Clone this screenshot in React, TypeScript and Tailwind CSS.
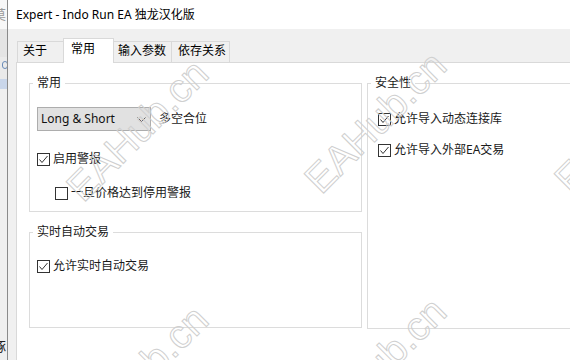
import React from "react";

const ui = "font-['Noto_Sans','Noto_Sans_CJK_SC',sans-serif]";

function Box({ on }: { on: boolean }) {
  return (
    <span className="flex h-[13px] w-[13px] shrink-0 items-center justify-center border border-[#333] bg-white">
      {on && (
        <svg width="11" height="11" viewBox="0 0 11 11">
          <path d="M1.5 5.5 L4 8.5 L9.5 2" fill="none" stroke="#333" strokeWidth="1" />
        </svg>
      )}
    </span>
  );
}

function CheckRow({ on, label, className = "" }: { on: boolean; label: string; className?: string }) {
  return (
    <div className={`flex h-4 items-center ${className}`}>
      <Box on={on} />
      <span className="ml-[3px] leading-4 text-[#1a1a1a]">{label}</span>
    </div>
  );
}

function Group({ title, className = "", children }: { title: string; className?: string; children: React.ReactNode }) {
  return (
    <fieldset className={`shrink-0 border border-[#dcdcdc] px-[3px] ${className}`}>
      <legend className="px-1 leading-4 text-[#1a1a1a]">{title}</legend>
      {children}
    </fieldset>
  );
}

const tabs = [
  { name: "关于", cls: "w-[46px] border-l pl-[5px]" },
  { name: "常用", cls: "" },
  { name: "输入参数", cls: "w-[58px] border-r pl-[4px]" },
  { name: "依存关系", cls: "w-[58px] border-r pl-[6px]" },
];

const marks = [
  "left-[47px] top-[110px]",
  "left-[285px] top-[102px]",
  "left-[535px] top-[102px]",
  "left-[47px] top-[356px]",
  "left-[285px] top-[348px]",
];

export default function App() {
  return (
    <div className={`relative flex h-[360px] w-[570px] overflow-hidden bg-[#f0f0f0] text-[12px] ${ui}`}>
      {/* window behind the dialog */}
      <div className="flex w-[7px] shrink-0 flex-col overflow-hidden">
        <div className="h-[29px] bg-[#f7f7f7] pt-[6px] text-[13px] leading-4 text-[#9a9a9a]">
          <span className="-ml-[7px]">莫</span>
        </div>
        <div className="h-[28px] bg-[#e4e4e4]" />
        <div className="h-[22px] bg-[#eaeaea]">
          <div className="ml-[2px] mt-[4px] h-[8px] w-[6px] rounded-full border border-[#6a8cb8]" />
        </div>
        <div className="h-[10px] bg-[#c9d6ea]" />
        <div className="flex-1 bg-[#efefef]" />
        <div className="h-[22px] bg-[#efefef] text-[13px] leading-4 text-[#222]">
          <span className="-ml-[7px]">琢</span>
        </div>
      </div>
      <div className="w-px shrink-0 bg-[#8a8a8a]" />

      {/* dialog */}
      <div className="flex min-w-0 flex-1 flex-col">
        <div className="flex h-[29px] shrink-0 items-center bg-white pl-[8px] text-[12px] text-black">
          Expert - Indo Run EA 独龙汉化版
        </div>
        <div className="flex flex-1 flex-col pl-[8px] pt-[9px]">
          <div className="flex h-[24px] items-end pl-px">
            {tabs.map((t) =>
              t.name === "常用" ? (
                <div
                  key={t.name}
                  className="relative z-10 -mb-px h-[25px] w-[51px] shrink-0 border border-b-0 border-[#d9d9d9] bg-white pl-[7px] pt-[2px] leading-4 text-black"
                >
                  {t.name}
                </div>
              ) : (
                <div
                  key={t.name}
                  className={`h-[21px] shrink-0 border-t border-[#d9d9d9] bg-[#f0f0f0] pt-px leading-4 text-black ${t.cls}`}
                >
                  {t.name}
                </div>
              )
            )}
          </div>
          <div className="flex-1 border border-r-0 border-b-0 border-[#d9d9d9] bg-white pl-[12px] pt-[12px]">
            <div className="flex gap-[5px]">
              <div className="flex w-[333px] shrink-0 flex-col gap-3">
                <Group title="常用" className="h-[137px]">
                  <div className="px-1">
                    <div className="mt-4 flex items-center">
                      <div className="flex h-[24px] w-[114px] items-center justify-between border border-[#adadad] bg-[#e1e1e1] pl-[3px] pr-[4px]">
                        <span className="leading-4 text-[#111]">Long &amp; Short</span>
                        <svg width="9" height="5" viewBox="0 0 9 5">
                          <path d="M0.5 0.5 L4.5 4.5 L8.5 0.5" fill="none" stroke="#606060" strokeWidth="1" />
                        </svg>
                      </div>
                      <span className="ml-[8px] leading-4 text-[#1a1a1a]">多空合位</span>
                    </div>
                    <CheckRow on label="启用警报" className="mt-5" />
                    <CheckRow on={false} label="一旦价格达到停用警报" className="ml-[18px] mt-[18px]" />
                  </div>
                </Group>
                <Group title="实时自动交易" className="h-[104px]">
                  <div className="px-1">
                    <CheckRow on label="允许实时自动交易" className="mt-[18px]" />
                  </div>
                </Group>
              </div>
              <Group title="安全性" className="h-[254px] w-[260px]">
                <div className="pl-[7px]">
                  <CheckRow on label="允许导入动态连接库" className="mt-[20px]" />
                  <CheckRow on label="允许导入外部EA交易" className="mt-[15px]" />
                </div>
              </Group>
            </div>
          </div>
        </div>
      </div>

      {/* EAHub.cn watermark */}
      {marks.map((m) => (
        <span
          key={m}
          className={`pointer-events-none absolute ${m} -rotate-45 whitespace-nowrap font-['Liberation_Sans',sans-serif] text-[40px] leading-[40px] text-transparent [-webkit-text-stroke:1px_#cfcfcf]`}
        >
          EAHub.cn
        </span>
      ))}
    </div>
  );
}
